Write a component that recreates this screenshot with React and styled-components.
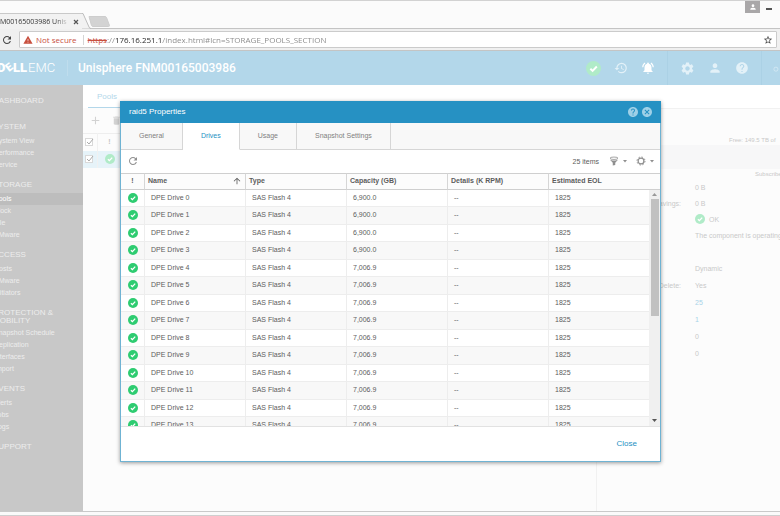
import React, { useState } from "react";
import styled, { createGlobalStyle } from "styled-components";
import {
  MdAdd,
  MdArrowUpward,
  MdCancel,
  MdDelete,
  MdHelp,
  MdHistory,
  MdNotificationsActive,
  MdPerson,
  MdRefresh,
  MdSearch,
  MdSettings,
  MdStarBorder,
  MdWarning,
} from "react-icons/md";

const GlobalStyle = createGlobalStyle`
  * {
    box-sizing: border-box;
  }

  body {
    margin: 0;
    background: #fcfcfc;
    font-family: "Liberation Sans", Arial, sans-serif;
    font-size: 7px;
    color: #5c5c5c;
    overflow-x: hidden;
  }

  button,
  input {
    font: inherit;
    color: inherit;
    margin: 0;
    padding: 0;
    border: none;
    background: none;
  }

  button {
    cursor: pointer;
  }

  a {
    color: inherit;
    text-decoration: none;
  }
`;

const Page = styled.div`
  display: flex;
  flex-direction: column;
  min-height: 100vh;
  overflow: hidden;
`;

/* browser */

const TabStrip = styled.div`
  display: flex;
  align-items: flex-end;
  height: 29px;
  background: #fbfbfb;
  border-top: 1px solid #d2d2d2;
  border-bottom: 1px solid #c4c4c4;
  font-family: "Open Sans", "Noto Sans", sans-serif;
  font-size: 7px;
`;

const BrowserTab = styled.div`
  display: flex;
  align-items: center;
  gap: 6px;
  width: 82px;
  height: 16px;
  margin-bottom: -1px;
  background: #f2f2f2;
  border-top: 1px solid #c9c9c9;

  span {
    flex: 1;
    margin-left: -9px;
    overflow: hidden;
    white-space: nowrap;
    color: #333;
    mask-image: linear-gradient(to right, #000 64px, transparent 78px);
  }

  button {
    display: flex;
    margin-right: 3px;
  }
`;

const TabEdge = styled.svg`
  display: block;
  margin-bottom: -1px;
`;

const NewTabButton = styled.button`
  display: flex;
  margin: 0 0 1px -3px;
`;

const WindowButtons = styled.div`
  display: flex;
  align-self: flex-start;
  gap: 6px;
  margin-left: auto;
  padding-right: 8px;

  button {
    display: flex;
    align-items: center;
    justify-content: center;
    height: 12px;
  }
`;

const UserButton = styled.button`
  width: 15px;
  background: #a9a7a8;
  color: #fff;
`;

const AddressBar = styled.div`
  display: flex;
  align-items: center;
  gap: 6px;
  height: 22px;
  padding: 0 3px 0 1px;
  background: #f0f0f0;
  border-bottom: 1px solid #c4c4c4;
  font-family: "Open Sans", "Noto Sans", sans-serif;
  font-size: 8px;

  > button {
    display: flex;
    color: #444;
  }
`;

const AddressBox = styled.div`
  flex: 1;
  display: flex;
  align-items: center;
  height: 17px;
  padding: 0 3px;
  background: #fff;
  border: 1px solid #cbcbcb;
  border-radius: 1px;

  button {
    display: flex;
    color: #444;
  }
`;

const NotSecure = styled.span`
  display: flex;
  align-items: center;
  gap: 3px;
  margin-right: 4px;
  padding-right: 6px;
  border-right: 1px solid #d5d5d5;
  line-height: 10px;
  color: #c8503f;
`;

const Scheme = styled.label`
  color: #c8503f;
  text-decoration: line-through;
`;

const AddressInput = styled.input`
  flex: 1;
  min-width: 0;
  outline: none;
  color: transparent;
  background: linear-gradient(to right, #888 8px, #222 8px, #222 55px, #888 55px);
  -webkit-background-clip: text;
  background-clip: text;
`;

const WindowEdge = styled.div`
  height: 5px;
  background: #fafafa;
  border-top: 1px solid #c9c9c9;
  border-bottom: 1px solid #cfcfcf;
`;

/* console */

const Console = styled.div`
  position: relative;
  flex: 1;
  display: flex;
  flex-direction: column;
`;

const TopBar = styled.header`
  display: flex;
  align-items: center;
  height: 34px;
  background: #b3d7ea;
  color: #e3f1f8;
`;

const Brand = styled.h1`
  margin: 0 auto 0 0;
  padding-left: 10px;
  border-left: 1px solid #bfdded;
  font-family: Roboto, sans-serif;
  font-size: 12px;
  font-weight: 500;
  line-height: 16px;
  color: #fff;
`;

const TopIcons = styled.nav`
  display: flex;
  align-items: center;
  gap: 13px;
  padding: 0 12px;
  height: 34px;
  border-right: 1px solid #abd1e5;

  button {
    display: flex;
  }
`;

const SearchButton = styled.button`
  display: flex;
  flex: none;
  width: 7px;
  margin-left: 11px;
  overflow: hidden;
`;

const Columns = styled.div`
  flex: 1;
  display: flex;
`;

const Sidebar = styled.nav`
  flex: none;
  width: 83px;
  padding-top: 12px;
  background: #c8c8c8;
  color: #ededed;
`;

const NavGroup = styled.section`
  min-height: 16px;
  margin-bottom: 10px;

  h2 {
    min-height: 10px;
    margin: 0 0 2px -7px;
    font-size: 8px;
    font-weight: 400;
    line-height: 8px;
  }
`;

const NavLink = styled.a`
  display: block;
  height: 12px;
  text-indent: -6px;
  line-height: 12px;
  white-space: nowrap;
  color: ${(props) => (props.$active ? "#fff" : "#ededed")};
  background: ${(props) => (props.$active ? "#bdbdbd" : "none")};
`;

const PoolList = styled.main`
  flex: 1;
  min-width: 0;
  border-right: 1px solid #f1f1f1;
`;

const SectionTabs = styled.div`
  height: 23px;
  padding-left: 5px;
  background: #fff;

  a {
    display: inline-block;
    height: 23px;
    padding: 0 9px;
    border-bottom: 1px solid #b3d7ea;
    font-size: 8px;
    line-height: 23px;
    color: #b3d7ea;
  }
`;

const PoolToolbar = styled.div`
  display: flex;
  align-items: center;
  gap: 9px;
  height: 25px;
  padding-left: 6px;
  color: #d2d2d2;

  button {
    display: flex;
  }
`;

const PoolTable = styled.table`
  width: 100%;
  table-layout: fixed;
  border-collapse: collapse;
  border-top: 1px solid #eee;
  color: #c4c4c4;

  th,
  td {
    height: 17px;
    padding: 0 2px;
    line-height: 8px;
    text-align: center;
    border-right: 1px solid #f1f1f1;
  }

  td {
    background: #e6f3f9;
  }

  td > svg {
    display: block;
    margin: 0 auto;
  }
`;

const CheckLabel = styled.label`
  position: relative;
  display: block;
  width: 9px;
  margin: 0 auto;

  input {
    appearance: none;
    display: block;
    width: 8px;
    height: 8px;
    border: 1px solid #d9d9d9;
    background: #fff;
  }

  svg {
    position: absolute;
    left: 0;
    top: 0;
    pointer-events: none;
  }
`;

const Details = styled.aside`
  flex: none;
  width: 183px;
  color: #c9c9c9;
  white-space: nowrap;
`;

const DetailsTop = styled.div`
  height: 24px;
  margin-left: -1px;
  background: #fff;
  border-bottom: 1px solid #f1f1f1;
`;

const UsageText = styled.p`
  margin: 0;
  padding-left: ${(props) => props.$start}px;
  height: ${(props) => props.$height}px;
  display: flex;
  align-items: flex-end;
  font-size: 6px;
  line-height: 10px;
`;

const UsageBar = styled.div`
  height: 24px;
  background: #f7f7f8;
`;

const Facts = styled.dl`
  display: grid;
  grid-template-columns: 91px 1fr;
  grid-auto-rows: ${(props) => props.$row}px;
  align-items: center;
  margin: 0 0 17px 7px;

  dt {
    padding-right: 14px;
    text-align: right;
  }

  dd {
    display: flex;
    align-items: center;
    gap: 4px;
    margin: 0;
  }

  a {
    color: #a9d3e8;
  }
`;

/* properties dialog */

const Overlay = styled.div`
  position: absolute;
  inset: 0;
  display: flex;
  align-items: center;
  padding: 0 119px 0 120px;
`;

const Dialog = styled.div`
  flex: 1;
  min-width: 0;
  background: #fff;
  border: 1px solid #6fb3d3;
  border-top: none;
  box-shadow: 0 1px 4px rgba(0, 0, 0, 0.4);
`;

const DialogHeader = styled.div`
  display: flex;
  align-items: center;
  gap: 2px;
  height: 22px;
  margin: 0 -1px;
  padding: 0 8px 0 9px;
  background: #2691c3;
  color: #9fd0e7;

  h2 {
    flex: 1;
    margin: 0;
    font-size: 8px;
    font-weight: 400;
    color: #fff;
  }

  button {
    display: flex;
  }
`;

const DialogTabs = styled.div`
  display: flex;
  height: 27px;
  background: #f8f8f8;
  border-bottom: 1px solid #d6d6d6;
`;

const DialogTab = styled.button`
  height: 27px;
  padding: 0 18px;
  border-right: 1px solid #d6d6d6;
  border-bottom: 1px solid ${(props) => (props.$active ? "#fff" : "#d6d6d6")};
  background: ${(props) => (props.$active ? "#fff" : "#f8f8f8")};
  color: ${(props) => (props.$active ? "#2691c3" : "#808080")};
`;

const GridToolbar = styled.div`
  display: flex;
  align-items: center;
  height: 23px;
  padding: 0 6px;
  color: #8f8f8f;

  span {
    margin-left: auto;
    margin-right: 10px;
    color: #5c5c5c;
  }

  button {
    display: flex;
    align-items: center;
    gap: 4px;
  }

  button + button {
    margin-left: 9px;
  }
`;

const GridArea = styled.div`
  position: relative;
  border-bottom: 1px solid #e2e2e2;
`;

const GridScroll = styled.div`
  height: 253px;
  overflow-y: auto;
  scrollbar-width: none;
`;

const DriveTable = styled.table`
  width: 100%;
  table-layout: fixed;
  border-collapse: separate;
  border-spacing: 0;

  th,
  td {
    padding: 0 0 0 6px;
    line-height: 8px;
    text-align: left;
    border-bottom: 1px solid #ededed;
    border-right: 1px solid #ededed;
  }

  th {
    position: sticky;
    top: 0;
    height: 17px;
    padding-left: 3px;
    background: #fcfcfc;
    border-top: 1px solid #cfcfcf;
    border-bottom-color: #cfcfcf;
    border-right-color: #d6d6d6;
  }

  td {
    height: 17px;
  }

  tbody tr:nth-child(even) td {
    height: 18px;
    background: #f8f8f8;
  }

  th:first-child,
  td:first-child {
    padding: 0;
    text-align: center;
  }

  th:last-child,
  td:last-child {
    border-right: none;
  }

  td svg {
    display: block;
    margin: 0 auto;
  }
`;

const SortHeading = styled.div`
  display: flex;
  align-items: center;
  justify-content: space-between;
  padding-right: 3px;
  height: 8px;
`;

const ScrollTrack = styled.div`
  position: absolute;
  top: 17px;
  right: 0;
  bottom: 0;
  display: flex;
  flex-direction: column;
  align-items: center;
  gap: 3px;
  width: 11px;
  padding: 3px 0 4px;
  background: #f0f0f0;
`;

const ScrollThumb = styled.div`
  width: 8px;
  height: 117px;
  margin-bottom: auto;
  background: #c1c1c1;
`;

const DialogFooter = styled.div`
  display: flex;
  align-items: center;
  justify-content: flex-end;
  height: 34px;
  padding-right: 23px;

  button {
    font-size: 8px;
    color: #2691c3;
  }
`;

const navGroups = [
  { title: "DASHBOARD", links: [] },
  { title: "SYSTEM", links: ["System View", "Performance", "Service"] },
  { title: "STORAGE", links: ["Pools", "Block", "File", "VMware"] },
  { title: "ACCESS", links: ["Hosts", "VMware", "Initiators"] },
  {
    title: "PROTECTION & MOBILITY",
    links: ["Snapshot Schedule", "Replication", "Interfaces", "Import"],
  },
  { title: "EVENTS", links: ["Alerts", "Jobs", "Logs"] },
  { title: "SUPPORT", links: [] },
];

const drives = Array.from({ length: 14 }, (_, i) => ({
  name: `DPE Drive ${i}`,
  type: "SAS Flash 4",
  capacity: i < 4 ? "6,900.0" : "7,006.9",
  details: "--",
  eol: "1825",
}));

const tabs = ["General", "Drives", "Usage", "Snapshot Settings"];

function OkIcon({ size = 10, color = "#2ecc71" }) {
  return (
    <svg width={size} height={size} viewBox="0 0 20 20" role="img" aria-label="OK">
      <circle cx="10" cy="10" r="10" fill={color} />
      <path d="M5.8 10.4l3 2.9 5.6-6" fill="none" stroke="#fff" strokeWidth="2.6" />
    </svg>
  );
}

function Caret() {
  return (
    <svg width="4" height="3" viewBox="0 0 4 3">
      <path d="M0 0h4L2 2.5z" fill="currentColor" />
    </svg>
  );
}

function FilterIcon() {
  return (
    <svg width="10" height="10" viewBox="0 0 20 20">
      <ellipse cx="10" cy="4.5" rx="8" ry="2.4" fill="none" stroke="currentColor" strokeWidth="1.6" />
      <path d="M2 7.5c3 2 13 2 16 0l-5.500 6V18l-5 1v-5.500z" fill="currentColor" />
    </svg>
  );
}

function GearIcon() {
  return (
    <svg width="10" height="10" viewBox="0 0 20 20" fill="none" stroke="currentColor">
      <circle cx="10" cy="10" r="5.8" strokeWidth="2.4" />
      <circle cx="10" cy="10" r="8" strokeWidth="2" strokeDasharray="3 3.283" />
    </svg>
  );
}

function DellLogo() {
  return (
    <svg
      width="67"
      height="14"
      viewBox="0 0 67 14"
      fill="#fff"
      fontFamily="Roboto, sans-serif"
      fontSize="13"
      role="img"
      aria-label="Dell EMC"
    >
      <text x="-3" y="11" fontWeight="900">D</text>
      <text x="6" y="10" fontWeight="900" fontSize="11" transform="rotate(-38 9 6)">E</text>
      <text x="13" y="11" fontWeight="900">LL</text>
      <text x="28" y="11" fontWeight="300">EMC</text>
    </svg>
  );
}

function Checked({ label }) {
  return (
    <CheckLabel>
      <input type="checkbox" defaultChecked aria-label={label} />
      <svg width="9" height="8" viewBox="0 0 9 8">
        <path d="M2 4l2 2 4-5" fill="none" stroke="#aaa" />
      </svg>
    </CheckLabel>
  );
}

function Browser() {
  return (
    <>
      <TabStrip>
        <BrowserTab>
          <span>FNM00165003986 Unisphere</span>
          <button aria-label="Close tab">
            <svg width="6" height="6" viewBox="0 0 6 6">
              <path d="M1 1l4 4M5 1l-4 4" stroke="#555" strokeWidth="1.2" />
            </svg>
          </button>
        </BrowserTab>
        <TabEdge width="9" height="16" viewBox="0 0 9 16">
          <path d="M0 .5h1L8 15.500H0" fill="#f2f2f2" />
          <path d="M0 .5h1L7 14q.5 1.500 2 1.500" fill="none" stroke="#bdbdbd" />
        </TabEdge>
        <NewTabButton aria-label="New tab">
          <svg width="22" height="11" viewBox="0 0 22 11">
            <path d="M1 .5h16q1 0 1.500 1l3 8q0 1-1 1H5q-1 0-1.500-1z" fill="#d3d3d3" stroke="#cdcdcd" />
          </svg>
        </NewTabButton>
        <WindowButtons>
          <UserButton aria-label="Account">
            <MdPerson size={8} />
          </UserButton>
          <button aria-label="Minimize">
            <svg width="6" height="10" viewBox="0 0 6 10">
              <path d="M0 7h6" stroke="#555" strokeWidth="2" />
            </svg>
          </button>
        </WindowButtons>
      </TabStrip>
      <AddressBar>
        <button aria-label="Reload">
          <MdRefresh size={12} />
        </button>
        <AddressBox>
          <NotSecure>
            <MdWarning size={10} />
            Not secure
          </NotSecure>
          <Scheme htmlFor="address">https</Scheme>
          <AddressInput
            id="address"
            type="text"
            defaultValue="://176.16.251.1/index.html#lcn=STORAGE_POOLS_SECTION"
          />
          <button aria-label="Bookmark">
            <MdStarBorder size={10} />
          </button>
        </AddressBox>
      </AddressBar>
    </>
  );
}

function ConsoleTopBar() {
  return (
    <TopBar>
      <DellLogo />
      <Brand>Unisphere FNM00165003986</Brand>
      <TopIcons>
        <button aria-label="Health">
          <OkIcon size={15} color="#b0ebc8" />
        </button>
        <button aria-label="Jobs">
          <MdHistory size={14} />
        </button>
        <button aria-label="Alerts">
          <MdNotificationsActive size={14} color="#fff" />
        </button>
      </TopIcons>
      <TopIcons>
        <button aria-label="Settings">
          <MdSettings size={15} />
        </button>
        <button aria-label="User">
          <MdPerson size={14} />
        </button>
        <button aria-label="Help">
          <MdHelp size={14} />
        </button>
      </TopIcons>
      <SearchButton aria-label="Search">
        <svg width="12" height="14" viewBox="0 0 12 14" fill="none" stroke="currentColor">
          <circle cx="5" cy="9" r="3.5" />
        </svg>
      </SearchButton>
    </TopBar>
  );
}

function SideNav() {
  return (
    <Sidebar>
      {navGroups.map((group) => (
        <NavGroup key={group.title}>
          <h2>{group.title}</h2>
          {group.links.map((link) => (
            <NavLink key={link} href="#" $active={link === "Pools"}>
              {link}
            </NavLink>
          ))}
        </NavGroup>
      ))}
    </Sidebar>
  );
}

function Pools() {
  return (
    <PoolList>
      <SectionTabs>
        <a href="#pools">Pools</a>
      </SectionTabs>
      <PoolToolbar>
        <button aria-label="Add pool">
          <MdAdd size={13} />
        </button>
        <button aria-label="Delete pool">
          <MdDelete size={11} />
        </button>
      </PoolToolbar>
      <PoolTable>
        <colgroup>
          <col width="14" />
          <col width="25" />
          <col />
        </colgroup>
        <thead>
          <tr>
            <th><Checked label="Select all pools" /></th>
            <th>!</th>
            <th />
          </tr>
        </thead>
        <tbody>
          <tr>
            <td><Checked label="Select pool" /></td>
            <td><OkIcon color="#b0ebc8" /></td>
            <td />
          </tr>
        </tbody>
      </PoolTable>
    </PoolList>
  );
}

function PoolDetails() {
  return (
    <Details>
      <DetailsTop />
      <UsageText $start={132} $height={36}>Free: 149.5 TB of</UsageText>
      <UsageBar />
      <UsageText $start={158} $height={10}>Subscribed</UsageText>
      <Facts $row={16}>
        <dt />
        <dd>0 B</dd>
        <dt>Data Reduction Savings:</dt>
        <dd>0 B</dd>
        <dt />
        <dd>
          <OkIcon color="#b0ebc8" />
          OK
        </dd>
        <dt />
        <dd>The component is operating normally.</dd>
      </Facts>
      <Facts $row={17}>
        <dt />
        <dd>Dynamic</dd>
        <dt>Snapshot Auto-Delete:</dt>
        <dd>Yes</dd>
        <dt />
        <dd><a href="#drives">25</a></dd>
        <dt />
        <dd><a href="#luns">1</a></dd>
        <dt />
        <dd>0</dd>
        <dt />
        <dd>0</dd>
      </Facts>
    </Details>
  );
}

function PropertiesDialog() {
  const [activeTab, setActiveTab] = useState("Drives");

  return (
    <Overlay>
      <Dialog role="dialog" aria-labelledby="dialog-title">
        <DialogHeader>
          <h2 id="dialog-title">raid5 Properties</h2>
          <button aria-label="Help">
            <MdHelp size={12} />
          </button>
          <button aria-label="Close dialog">
            <MdCancel size={12} />
          </button>
        </DialogHeader>
        <DialogTabs role="tablist">
          {tabs.map((tab) => (
            <DialogTab
              key={tab}
              role="tab"
              aria-selected={tab === activeTab}
              $active={tab === activeTab}
              onClick={() => setActiveTab(tab)}
            >
              {tab}
            </DialogTab>
          ))}
        </DialogTabs>
        <GridToolbar>
          <button aria-label="Refresh">
            <MdRefresh size={12} />
          </button>
          <span>25 items</span>
          <button aria-label="Filter">
            <FilterIcon />
            <Caret />
          </button>
          <button aria-label="Grid settings">
            <GearIcon />
            <Caret />
          </button>
        </GridToolbar>
        <GridArea>
          <GridScroll>
            <DriveTable>
              <colgroup>
                <col width="24" />
                <col width="101" />
                <col width="101" />
                <col width="101" />
                <col width="101" />
                <col />
              </colgroup>
              <thead>
                <tr>
                  <th>!</th>
                  <th>
                    <SortHeading>
                      Name
                      <MdArrowUpward size={10} />
                    </SortHeading>
                  </th>
                  <th>Type</th>
                  <th>Capacity (GB)</th>
                  <th>Details (K RPM)</th>
                  <th>Estimated EOL</th>
                </tr>
              </thead>
              <tbody>
                {drives.map((drive) => (
                  <tr key={drive.name}>
                    <td><OkIcon /></td>
                    <td>{drive.name}</td>
                    <td>{drive.type}</td>
                    <td>{drive.capacity}</td>
                    <td>{drive.details}</td>
                    <td>{drive.eol}</td>
                  </tr>
                ))}
              </tbody>
            </DriveTable>
          </GridScroll>
          <ScrollTrack aria-hidden="true">
            <svg width="5" height="3" viewBox="0 0 5 3">
              <path d="M0 3h5L2.500 0z" fill="#999" />
            </svg>
            <ScrollThumb />
            <svg width="5" height="3" viewBox="0 0 5 3">
              <path d="M0 0h5L2.500 3z" fill="#555" />
            </svg>
          </ScrollTrack>
        </GridArea>
        <DialogFooter>
          <button>Close</button>
        </DialogFooter>
      </Dialog>
    </Overlay>
  );
}

export default function App() {
  return (
    <Page>
      <GlobalStyle />
      <Browser />
      <Console>
        <ConsoleTopBar />
        <Columns>
          <SideNav />
          <Pools />
          <PoolDetails />
        </Columns>
        <PropertiesDialog />
      </Console>
      <WindowEdge />
    </Page>
  );
}
